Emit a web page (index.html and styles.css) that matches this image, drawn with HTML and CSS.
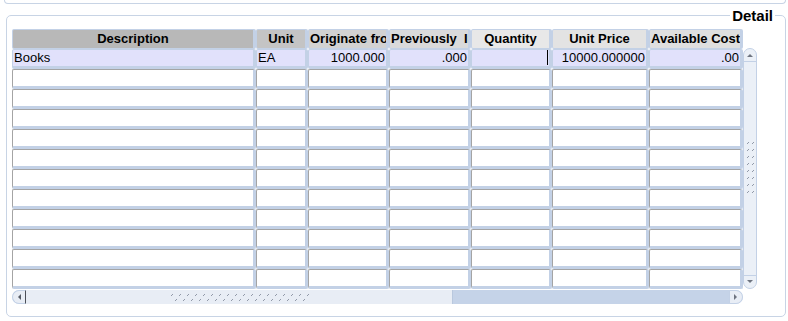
FILE: index.html
```html
<!DOCTYPE html>
<html lang="en">
<head>
    <meta charset="UTF-8">
    <title>Detail</title>
    <link rel="stylesheet" href="styles.css">
</head>
<body>
    <div class="top-panel"></div>
    <fieldset class="detail">
        <legend>Detail</legend>
        <div class="area">
            <div class="grid">
                <!-- header -->
                <div class="th h1">Description</div>
                <div class="th h2">Unit</div>
                <div class="th h3">Originate from</div>
                <div class="th h4">Previously&nbsp; Invoiced</div>
                <div class="th h5">Quantity</div>
                <div class="th h6">Unit Price</div>
                <div class="th h7">Available Cost</div>
                <!-- current record -->
                <div class="cell sel">Books</div>
                <div class="cell sel">EA</div>
                <div class="cell sel num">1000.000</div>
                <div class="cell sel num">.000</div>
                <div class="cell sel num"><span class="caret"></span></div>
                <div class="cell sel num">10000.000000</div>
                <div class="cell sel num">.00</div>
                <!-- empty records -->
                <div class="cell"></div><div class="cell"></div><div class="cell"></div><div class="cell"></div><div class="cell"></div><div class="cell"></div><div class="cell"></div>
                <div class="cell"></div><div class="cell"></div><div class="cell"></div><div class="cell"></div><div class="cell"></div><div class="cell"></div><div class="cell"></div>
                <div class="cell"></div><div class="cell"></div><div class="cell"></div><div class="cell"></div><div class="cell"></div><div class="cell"></div><div class="cell"></div>
                <div class="cell"></div><div class="cell"></div><div class="cell"></div><div class="cell"></div><div class="cell"></div><div class="cell"></div><div class="cell"></div>
                <div class="cell"></div><div class="cell"></div><div class="cell"></div><div class="cell"></div><div class="cell"></div><div class="cell"></div><div class="cell"></div>
                <div class="cell"></div><div class="cell"></div><div class="cell"></div><div class="cell"></div><div class="cell"></div><div class="cell"></div><div class="cell"></div>
                <div class="cell"></div><div class="cell"></div><div class="cell"></div><div class="cell"></div><div class="cell"></div><div class="cell"></div><div class="cell"></div>
                <div class="cell"></div><div class="cell"></div><div class="cell"></div><div class="cell"></div><div class="cell"></div><div class="cell"></div><div class="cell"></div>
                <div class="cell"></div><div class="cell"></div><div class="cell"></div><div class="cell"></div><div class="cell"></div><div class="cell"></div><div class="cell"></div>
                <div class="cell"></div><div class="cell"></div><div class="cell"></div><div class="cell"></div><div class="cell"></div><div class="cell"></div><div class="cell"></div>
                <div class="cell"></div><div class="cell"></div><div class="cell"></div><div class="cell"></div><div class="cell"></div><div class="cell"></div><div class="cell"></div>
            </div>
            <div class="vscroll">
                <div class="vbtn up">
                    <svg width="12" height="6" viewBox="0 0 12 6"><path d="M3 5 L6 2 L9 5 Z" fill="#6e7480"/></svg>
                </div>
                <div class="vthumb">
                    <svg width="12" height="59" viewBox="0 0 12 59">
                        <defs>
                            <pattern id="vgrip" width="12" height="7" patternUnits="userSpaceOnUse">
                                <path d="M3 5 L5 3 M8 5 L10 3" stroke="#9199a8" stroke-width="1"/>
                            </pattern>
                        </defs>
                        <rect width="12" height="59" fill="url(#vgrip)"/>
                    </svg>
                </div>
                <div class="vbtn down">
                    <svg width="12" height="6" viewBox="0 0 12 6"><path d="M3 1 L6 4 L9 1 Z" fill="#6e7480"/></svg>
                </div>
            </div>
        </div>
        <div class="hscroll">
            <div class="hbtn left">
                <svg width="6" height="12" viewBox="0 0 6 12"><path d="M5 3 L2 6 L5 9 Z" fill="#555b66"/></svg>
            </div>
            <div class="hthumb">
                <svg width="140" height="12" viewBox="0 0 140 12">
                    <defs>
                        <pattern id="hgrip" width="8" height="12" patternUnits="userSpaceOnUse">
                            <path d="M2 5 L4 3 M6 10 L8 8" stroke="#9199a8" stroke-width="1"/>
                        </pattern>
                    </defs>
                    <rect width="140" height="12" fill="url(#hgrip)"/>
                </svg>
            </div>
            <div class="htrack"></div>
            <div class="hbtn right">
                <svg width="6" height="12" viewBox="0 0 6 12"><path d="M1 3 L4 6 L1 9 Z" fill="#6e7480"/></svg>
            </div>
        </div>
    </fieldset>
</body>
</html>
```

FILE: styles.css
```css
* {
    box-sizing: border-box;
}

body {
    margin: 0;
    background: #fff;
    font-family: "Liberation Sans", Arial, sans-serif;
    color: #000;
}

.top-panel {
    height: 4px;
    margin: 0 2px 0 4px;
    border: 1px solid #c8d4e5;
    border-top: 0;
    border-radius: 0 0 5px 5px;
}

.detail {
    margin: 3px 2px 0 6px;
    padding: 0 0 12px 0;
    border: 1px solid #c8d4e5;
    border-radius: 5px;
    min-width: 0;
}

.detail legend {
    margin-left: auto;
    margin-right: 10px;
    padding: 0 2px;
    font-size: 15px;
    line-height: 17px;
    font-weight: bold;
}

.area {
    display: flex;
    margin: 5px 0 0 5px;
}

.grid {
    display: grid;
    grid-template-columns: 244px 52px 81px 82px 81px 97px 94px;
    grid-auto-rows: 20px;
}

.th,
.cell {
    overflow: hidden;
    white-space: nowrap;
    border-radius: 2px;
    font-size: 13px;
}

.th {
    border: 1px solid #c3d1e6;
    border-right-width: 3px;
    line-height: 18px;
    font-weight: bold;
    text-align: center;
    padding: 0 1px;
}

.h1 { background: #b8b8b8; }
.h2 { background: #c4c4c4; }
.h3 { background: #d2d2d2; }
.h4 { background: #dadada; }
.h5 { background: #e8e8e8; }
.h6 { background: #e3e3e3; }
.h7 { background: #dfdfdf; }

.cell {
    border-top: 1px solid #a4a4a4;
    border-left: 1px solid #a4a4a4;
    border-right: 3px solid #c3d1e6;
    border-bottom: 3px solid #c3d1e6;
    line-height: 16px;
    padding: 0 1px;
    background: #fff;
}

.cell.sel {
    background: #e1e1fb;
    border-top-color: #c3d1e6;
    border-left-color: #c3d1e6;
}

.cell.num {
    text-align: right;
}

.caret {
    display: inline-block;
    width: 1px;
    height: 15px;
    vertical-align: top;
    background: #000;
}

.vscroll {
    display: flex;
    flex-direction: column;
    width: 14px;
    height: 241px;
    margin-top: 19px;
    border: 1px solid #c3d1e6;
    border-radius: 7px;
    background: #ebf0f7;
}

.vbtn {
    height: 13px;
    display: flex;
    align-items: center;
    justify-content: center;
}

.vbtn.up {
    border-bottom: 1px solid #c3d1e6;
}

.vbtn.down {
    border-top: 1px solid #c3d1e6;
}

.vthumb {
    flex: 1;
    display: flex;
    align-items: center;
    justify-content: center;
}

.hscroll {
    display: flex;
    width: 731px;
    height: 14px;
    margin: 1px 0 0 5px;
    border-radius: 7px;
    background: #c5d3e8;
    overflow: hidden;
}

.hbtn {
    width: 14px;
    display: flex;
    align-items: center;
    justify-content: center;
    background: #e8edf5;
    border: 1px solid #c3d1e6;
}

.hbtn.left {
    border-radius: 7px 0 0 7px;
    border-right: 1px solid #4a4f58;
}

.hbtn.right {
    border-radius: 0 7px 7px 0;
}

.hthumb {
    width: 427px;
    display: flex;
    align-items: center;
    justify-content: center;
    background: #e8edf5;
    border-right: 1px solid #b9c8de;
}

.htrack {
    flex: 1;
}
```
